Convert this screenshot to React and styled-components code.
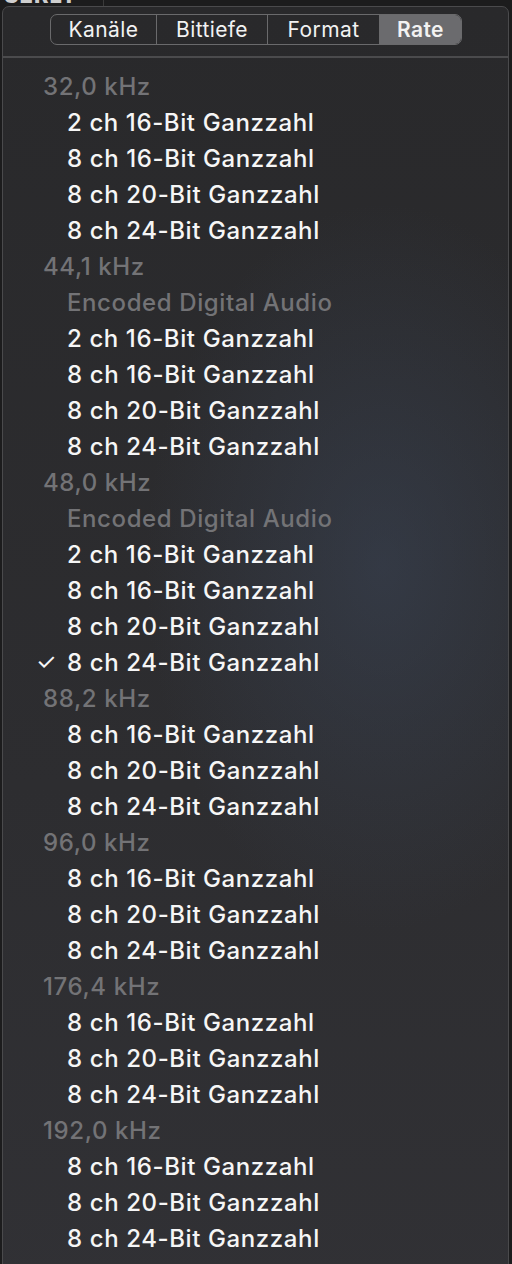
import React from 'react'
import styled, { createGlobalStyle } from 'styled-components'

const Global = createGlobalStyle`
  html, body {
    margin: 0;
    padding: 0;
    background: #1c1c1d;
    font-family: Inter, "Noto Sans", sans-serif;
    -webkit-font-smoothing: antialiased;
  }
`

const Page = styled.div`
  width: 512px;
  height: 1264px;
  overflow: hidden;
  background: #1c1c1d;
`

const Behind = styled.div`
  height: 6px;
  overflow: hidden;
  display: flex;
  padding-left: 4px;
`

const BehindText = styled.div`
  font-weight: 800;
  font-size: 22px;
  line-height: 22px;
  margin-top: -16px;
  color: #cfcfcf;
  letter-spacing: 1px;
  width: 99px;
  border-right: 1px solid #3a3a3a;
`

const Panel = styled.div`
  margin: 0 3px 0 2px;
  height: 1300px;
  border: 1px solid #4a4a4c;
  border-radius: 7px;
  background:
    radial-gradient(ellipse 340px 520px at 380px 560px, rgba(64, 78, 102, 0.4), rgba(64, 78, 102, 0) 70%),
    linear-gradient(180deg, #29292b 0%, #2d2d30 60%, #313135 100%);
  overflow: hidden;
`

const TabBar = styled.div`
  display: flex;
  justify-content: center;
  padding: 7px 0 11px 1px;
  border-bottom: 2px solid #4b4b4d;
`

const Segments = styled.div`
  display: flex;
  height: 29px;
  border: 1px solid #6a6a6c;
  border-radius: 7px;
  overflow: hidden;
`

const Segment = styled.div`
  display: flex;
  align-items: center;
  justify-content: center;
  width: ${p => p.w}px;
  font-size: 21px;
  letter-spacing: 0.4px;
  font-weight: ${p => (p.active ? 600 : 400)};
  color: #f2f2f2;
  background: ${p => (p.active ? '#6b6b6e' : 'transparent')};
  & + & {
    border-left: 1px solid #6a6a6c;
  }
`

const List = styled.div`
  padding-top: 10px;
`

const Row = styled.div`
  display: flex;
  align-items: center;
  height: 36px;
  font-size: 24px;
  font-weight: 500;
  letter-spacing: 0.6px;
  padding-left: ${p => (p.header ? 40 : 64)}px;
  color: ${p => (p.dim ? '#737376' : '#f6f6f6')};
  position: relative;
`

const Check = styled.span`
  position: absolute;
  left: 33px;
  font-size: 23px;
  font-weight: 400;
  color: #f6f6f6;
`

const rates = [
  { rate: '32,0 kHz', items: ['2 ch 16-Bit Ganzzahl', '8 ch 16-Bit Ganzzahl', '8 ch 20-Bit Ganzzahl', '8 ch 24-Bit Ganzzahl'] },
  { rate: '44,1 kHz', encoded: true, items: ['2 ch 16-Bit Ganzzahl', '8 ch 16-Bit Ganzzahl', '8 ch 20-Bit Ganzzahl', '8 ch 24-Bit Ganzzahl'] },
  { rate: '48,0 kHz', encoded: true, items: ['2 ch 16-Bit Ganzzahl', '8 ch 16-Bit Ganzzahl', '8 ch 20-Bit Ganzzahl', '8 ch 24-Bit Ganzzahl'], checked: 3 },
  { rate: '88,2 kHz', items: ['8 ch 16-Bit Ganzzahl', '8 ch 20-Bit Ganzzahl', '8 ch 24-Bit Ganzzahl'] },
  { rate: '96,0 kHz', items: ['8 ch 16-Bit Ganzzahl', '8 ch 20-Bit Ganzzahl', '8 ch 24-Bit Ganzzahl'] },
  { rate: '176,4 kHz', items: ['8 ch 16-Bit Ganzzahl', '8 ch 20-Bit Ganzzahl', '8 ch 24-Bit Ganzzahl'] },
  { rate: '192,0 kHz', items: ['8 ch 16-Bit Ganzzahl', '8 ch 20-Bit Ganzzahl', '8 ch 24-Bit Ganzzahl'] },
]

const tabs = [
  { label: 'Kanäle', w: 105 },
  { label: 'Bittiefe', w: 110 },
  { label: 'Format', w: 111 },
  { label: 'Rate', w: 81, active: true },
]

const App = () => {
  return (
    <Page>
      <Global />
      <Behind>
        <BehindText>SERLY</BehindText>
      </Behind>
      <Panel>
        <TabBar>
          <Segments>
            {tabs.map(t => (
              <Segment key={t.label} w={t.w} active={t.active}>{t.label}</Segment>
            ))}
          </Segments>
        </TabBar>
        <List>
          {rates.map(r => (
            <React.Fragment key={r.rate}>
              <Row header dim>{r.rate}</Row>
              {r.encoded && <Row dim>Encoded Digital Audio</Row>}
              {r.items.map((it, i) => (
                <Row key={i}>
                  {r.checked === i && <Check>✓</Check>}
                  {it}
                </Row>
              ))}
            </React.Fragment>
          ))}
        </List>
      </Panel>
    </Page>
  )
}

export default App
